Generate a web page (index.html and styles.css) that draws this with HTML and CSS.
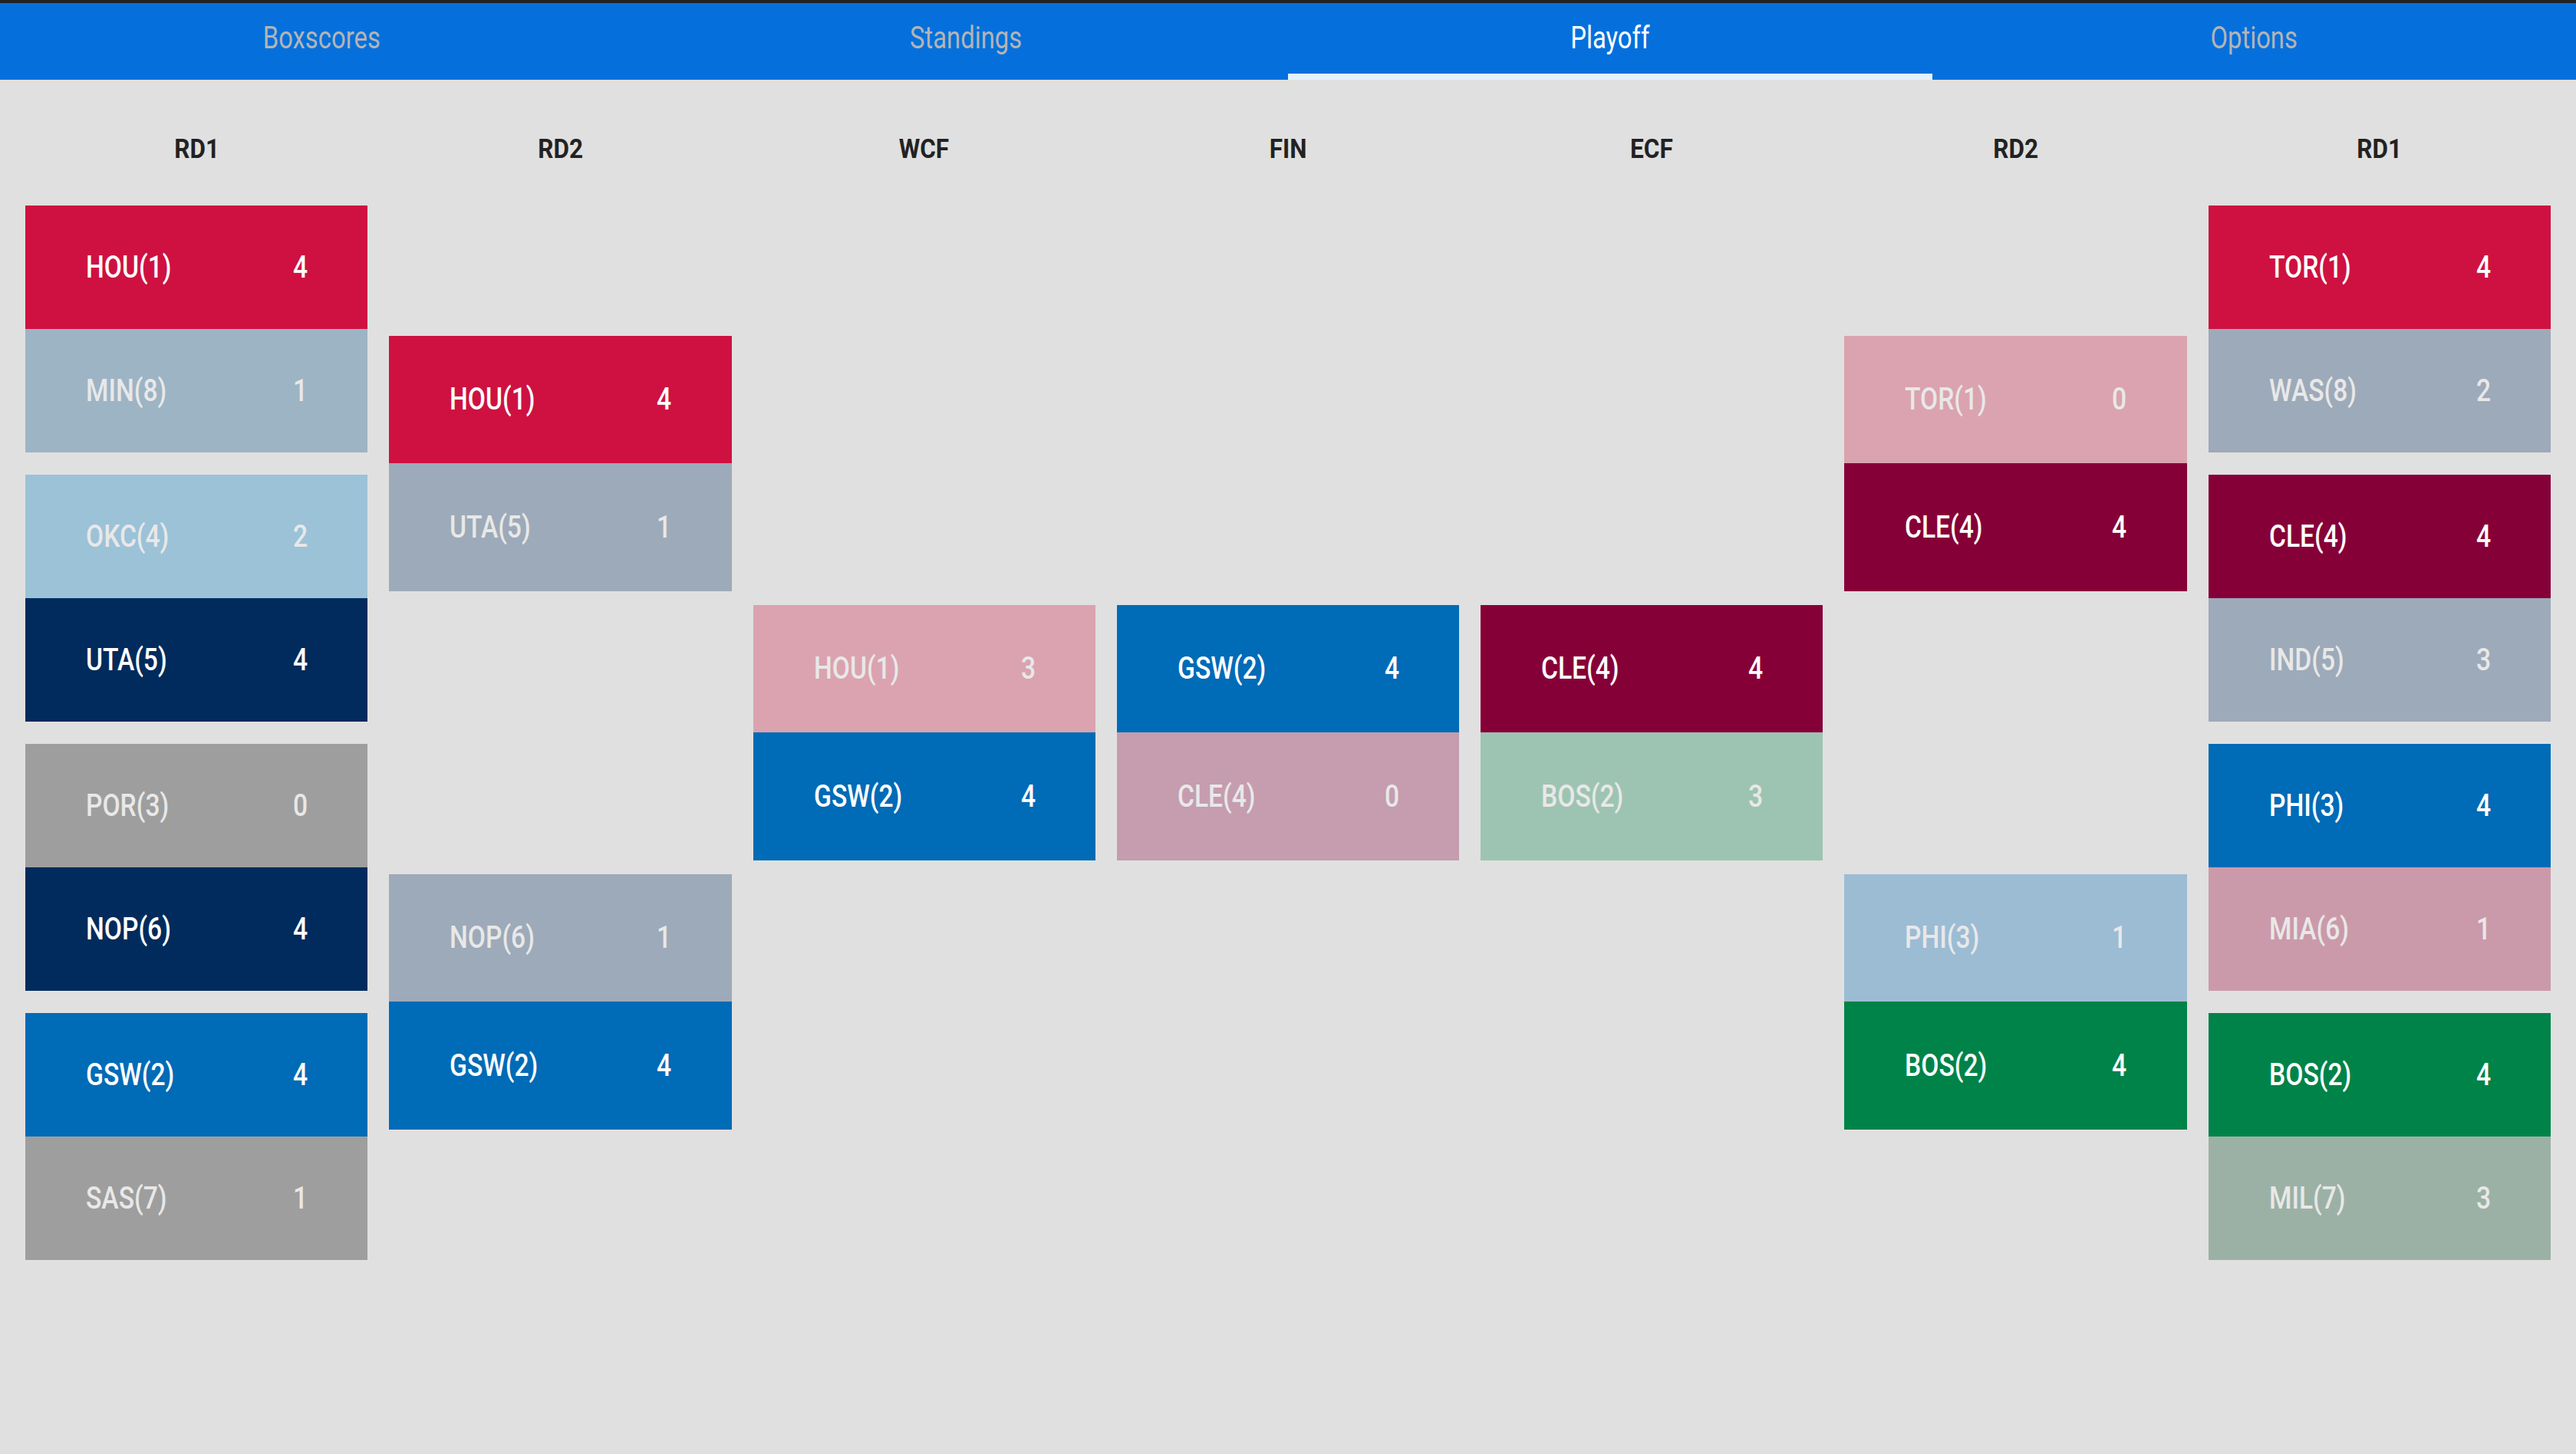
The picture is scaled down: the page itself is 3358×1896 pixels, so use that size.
FILE: index.html
```html
<!DOCTYPE html>
<html lang="en">
<head>
<meta charset="utf-8">
<title>Playoff</title>
<link rel="stylesheet" href="styles.css">
</head>
<body>
<div class="topbar"></div>
<nav class="tabs">
  <div class="tab"><span class="tab-label">Boxscores</span></div>
  <div class="tab"><span class="tab-label">Standings</span></div>
  <div class="tab active"><span class="tab-label">Playoff</span></div>
  <div class="tab"><span class="tab-label">Options</span></div>
</nav>
<main class="bracket">
  <section class="round r1">
    <div class="round-title"><span>RD1</span></div>
    <div class="slots">
      <div class="slot"><div class="series">
        <div class="team hou"><span class="name">HOU(1)</span><span class="score">4</span></div>
        <div class="team min-l loser"><span class="name">MIN(8)</span><span class="score">1</span></div>
      </div></div>
      <div class="slot"><div class="series">
        <div class="team okc-l loser"><span class="name">OKC(4)</span><span class="score">2</span></div>
        <div class="team uta"><span class="name">UTA(5)</span><span class="score">4</span></div>
      </div></div>
      <div class="slot"><div class="series">
        <div class="team gray-l loser"><span class="name">POR(3)</span><span class="score">0</span></div>
        <div class="team nop"><span class="name">NOP(6)</span><span class="score">4</span></div>
      </div></div>
      <div class="slot"><div class="series">
        <div class="team gsw"><span class="name">GSW(2)</span><span class="score">4</span></div>
        <div class="team gray-l loser"><span class="name">SAS(7)</span><span class="score">1</span></div>
      </div></div>
    </div>
  </section>

  <section class="round">
    <div class="round-title"><span>RD2</span></div>
    <div class="slots">
      <div class="slot"><div class="series">
        <div class="team hou"><span class="name">HOU(1)</span><span class="score">4</span></div>
        <div class="team navy-l loser"><span class="name">UTA(5)</span><span class="score">1</span></div>
      </div></div>
      <div class="slot"><div class="series">
        <div class="team navy-l loser"><span class="name">NOP(6)</span><span class="score">1</span></div>
        <div class="team gsw"><span class="name">GSW(2)</span><span class="score">4</span></div>
      </div></div>
    </div>
  </section>

  <section class="round">
    <div class="round-title"><span>WCF</span></div>
    <div class="slots">
      <div class="slot"><div class="series">
        <div class="team red-l loser"><span class="name">HOU(1)</span><span class="score">3</span></div>
        <div class="team gsw"><span class="name">GSW(2)</span><span class="score">4</span></div>
      </div></div>
    </div>
  </section>

  <section class="round">
    <div class="round-title"><span>FIN</span></div>
    <div class="slots">
      <div class="slot"><div class="series">
        <div class="team gsw"><span class="name">GSW(2)</span><span class="score">4</span></div>
        <div class="team cle-l loser"><span class="name">CLE(4)</span><span class="score">0</span></div>
      </div></div>
    </div>
  </section>

  <section class="round">
    <div class="round-title"><span>ECF</span></div>
    <div class="slots">
      <div class="slot"><div class="series">
        <div class="team cle"><span class="name">CLE(4)</span><span class="score">4</span></div>
        <div class="team bos-l loser"><span class="name">BOS(2)</span><span class="score">3</span></div>
      </div></div>
    </div>
  </section>

  <section class="round">
    <div class="round-title"><span>RD2</span></div>
    <div class="slots">
      <div class="slot"><div class="series">
        <div class="team red-l loser"><span class="name">TOR(1)</span><span class="score">0</span></div>
        <div class="team cle"><span class="name">CLE(4)</span><span class="score">4</span></div>
      </div></div>
      <div class="slot"><div class="series">
        <div class="team phi-l loser"><span class="name">PHI(3)</span><span class="score">1</span></div>
        <div class="team bos"><span class="name">BOS(2)</span><span class="score">4</span></div>
      </div></div>
    </div>
  </section>

  <section class="round r1">
    <div class="round-title"><span>RD1</span></div>
    <div class="slots">
      <div class="slot"><div class="series">
        <div class="team tor"><span class="name">TOR(1)</span><span class="score">4</span></div>
        <div class="team navy-l loser"><span class="name">WAS(8)</span><span class="score">2</span></div>
      </div></div>
      <div class="slot"><div class="series">
        <div class="team cle"><span class="name">CLE(4)</span><span class="score">4</span></div>
        <div class="team navy-l loser"><span class="name">IND(5)</span><span class="score">3</span></div>
      </div></div>
      <div class="slot"><div class="series">
        <div class="team phi"><span class="name">PHI(3)</span><span class="score">4</span></div>
        <div class="team mia-l loser"><span class="name">MIA(6)</span><span class="score">1</span></div>
      </div></div>
      <div class="slot"><div class="series">
        <div class="team bos"><span class="name">BOS(2)</span><span class="score">4</span></div>
        <div class="team mil-l loser"><span class="name">MIL(7)</span><span class="score">3</span></div>
      </div></div>
    </div>
  </section>
</main>
</body>
</html>
```

FILE: styles.css
```css
* { box-sizing: border-box; }

html, body {
  margin: 0;
  padding: 0;
  background: #e0e0e0;
  font-family: Roboto, "Noto Sans", "Liberation Sans", sans-serif;
}

body {
  width: 3358px;
  height: 1896px;
  overflow: hidden;
}

.topbar {
  height: 4px;
  background: #232323;
}

.tabs {
  display: grid;
  grid-template-columns: repeat(4, 1fr);
  height: 100px;
  background: #0570dc;
}

.tab {
  display: flex;
  align-items: center;
  justify-content: center;
  border-bottom: 8px solid transparent;
  color: #b4b4b4;
  font-size: 40px;
  line-height: 1;
}

.tab.active {
  color: #ffffff;
  border-bottom-color: #e3f2fd;
}

.tab-label {
  display: inline-block;
  transform: scaleX(0.82);
  transform-origin: center;
}

.bracket {
  display: grid;
  grid-template-columns: repeat(7, 1fr);
  column-gap: 28px;
  padding: 0 33px;
}

.round {
  display: flex;
  flex-direction: column;
}

.round-title {
  height: 149px;
  padding-top: 73px;
  text-align: center;
  font-size: 35px;
  line-height: 35px;
  font-weight: 700;
  color: #222222;
}

.round-title span {
  display: inline-block;
  transform: scaleX(0.9);
}

.slots {
  height: 1404px;
  display: flex;
  flex-direction: column;
}

.slot {
  flex: 1;
  display: flex;
  align-items: center;
}

.series {
  width: 100%;
  display: flex;
  flex-direction: column;
}

.team {
  height: 166.5px;
  display: flex;
  align-items: center;
  padding-left: 79px;
  color: #ffffff;
  font-size: 41px;
  font-weight: 500;
  line-height: 1;
}

.r1 .team {
  height: 161px;
}

.team .name {
  display: inline-block;
  width: 270px;
  transform: scaleX(0.82);
  transform-origin: left center;
  white-space: nowrap;
}

.team .score {
  display: inline-block;
  transform: scaleX(0.82);
  transform-origin: left center;
}

.team.loser {
  color: #e8e8e8;
}

/* winners */
.hou, .tor { background: #ce1141; }
.uta, .nop { background: #002b5c; }
.gsw, .phi { background: #006bb6; }
.cle { background: #860038; }
.bos { background: #008348; }

/* eliminated (faded) */
.red-l { background: #daa3af; }
.min-l { background: #9db4c5; }
.okc-l { background: #9cc2d8; }
.navy-l { background: #9daab9; }
.gray-l { background: #9e9e9e; }
.cle-l { background: #c59dae; }
.bos-l { background: #9dc4b2; }
.phi-l { background: #9cbcd4; }
.mia-l { background: #cb9aaa; }
.mil-l { background: #9cb1a5; }
```
